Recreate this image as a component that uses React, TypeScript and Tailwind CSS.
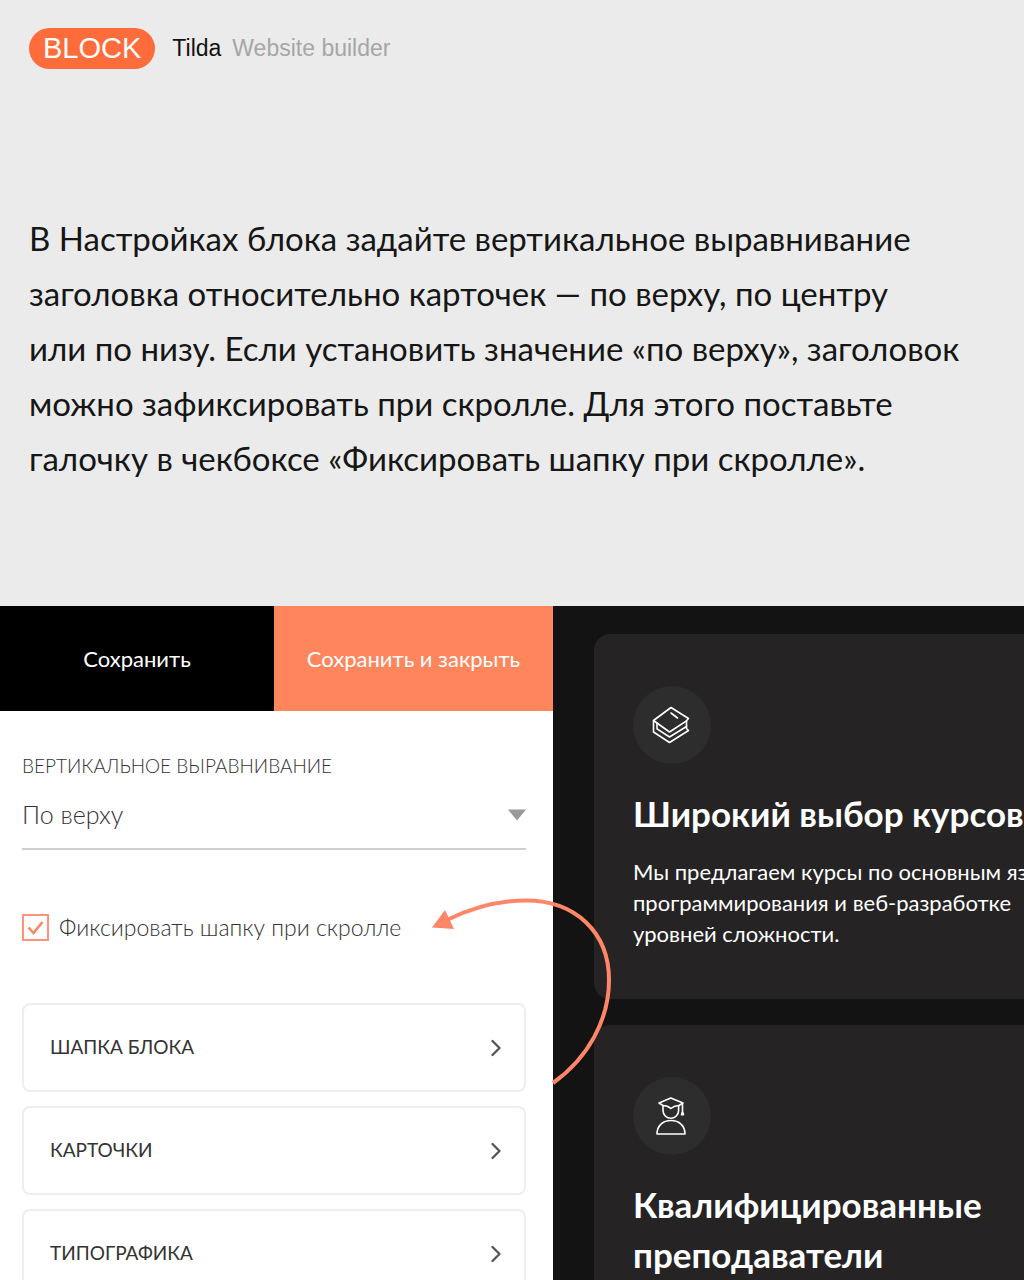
import { useState } from "react";
import type { ReactNode } from "react";
import { ChevronRight } from "lucide-react";

const sections = ["ШАПКА БЛОКА", "КАРТОЧКИ", "ТИПОГРАФИКА"];

function BooksIcon() {
  return (
    <svg viewBox="0 0 40 40" className="h-10 w-10" fill="none" stroke="white" strokeWidth="1.6" strokeLinejoin="round" strokeLinecap="round">
      <path d="M19 2.5 36.5 13.5 34.5 15.8 17.5 27 1.5 15.5Z" />
      <path d="M1.5 15.5V27L17.5 37.5 36.5 25.5 34.5 23.5V15.8" />
      <path d="M5 18.2V23.8L17.5 32 34.5 21.5" />
      <path d="M19 8 25.5 13" />
    </svg>
  );
}

function GraduateIcon() {
  return (
    <svg viewBox="0 0 40 40" className="h-10 w-10" fill="none" stroke="white" strokeWidth="1.6" strokeLinejoin="round" strokeLinecap="round">
      <path d="M7 7 18.8 2 31 7 27 9.5Q22.5 9.5 18.8 12.5 15.5 9.5 11 9.5Z" />
      <path d="M11 9.5V14.5a7.8 7.8 0 0 0 15.6 0V9.5" />
      <path d="M30.5 7.5V16M30.5 15.5 29.5 18.8h2Z" />
      <path d="M5 38C5 29.5 11 24.5 19 24.5s14 5 14 13.5Z" />
    </svg>
  );
}

function FeatureCard({ icon, title, children }: { icon: ReactNode; title: ReactNode; children?: ReactNode }) {
  return (
    <article className="w-[560px] rounded-2xl bg-[#252324] px-[39px] pt-[52px] pb-[50px] text-white">
      <div className="flex h-[78px] w-[78px] items-center justify-center rounded-full bg-[#2d2d2d]">{icon}</div>
      <h2 className="mt-6 text-[35px] leading-[50px] font-bold whitespace-nowrap">{title}</h2>
      {children && <p className="mt-[18px] text-[22px] leading-[31px] whitespace-nowrap">{children}</p>}
    </article>
  );
}

export default function App() {
  const [align, setAlign] = useState("top");
  const [fixed, setFixed] = useState(true);

  return (
    <div className="flex h-screen flex-col overflow-hidden bg-[#ebebeb] font-['Lato','Open_Sans',sans-serif]">
      <header className="flex shrink-0 items-center px-[29px] pt-7 font-['Liberation_Sans',Arial,sans-serif]">
        <span className="flex h-[41px] items-center rounded-full bg-[#ff6c3b] px-[14px] text-[29px] text-white">BLOCK</span>
        <span className="ml-[17px] text-[23px] text-[#111]">Tilda</span>
        <span className="ml-[11px] text-[23px] text-[#a6a6a6]">Website builder</span>
      </header>

      <p className="shrink-0 px-[29px] pt-[142px] pb-[120px] text-[33px] leading-[55px] text-[#161616]">
        В Настройках блока задайте вертикальное выравнивание
        <br />
        заголовка относительно карточек — по верху, по центру
        <br />
        или по низу. Если установить значение «по верху», заголовок
        <br />
        можно зафиксировать при скролле. Для этого поставьте
        <br />
        галочку в чекбоксе «Фиксировать шапку при скролле».
      </p>

      <main className="flex min-h-0 flex-1">
        <section className="relative w-[54%] shrink-0 bg-white text-[#333]">
          <div className="flex h-[105px] text-[22px] text-white">
            <button className="h-full w-[274px] bg-black">Сохранить</button>
            <button className="h-full flex-1 bg-[#ff855d]">Сохранить и закрыть</button>
          </div>

          <div className="pt-10 pr-[27px] pl-[22px]">
            <label htmlFor="align" className="block text-[19px] leading-[30px] font-light">
              ВЕРТИКАЛЬНОЕ ВЫРАВНИВАНИЕ
            </label>
            <div className="relative border-b-2 border-[#cfcfcf]">
              <select
                id="align"
                value={align}
                onChange={(e) => setAlign(e.target.value)}
                className="h-[67px] w-full appearance-none bg-transparent text-[25px] font-light outline-none"
              >
                <option value="top">По верху</option>
                <option value="center">По центру</option>
                <option value="bottom">По низу</option>
              </select>
              <svg viewBox="0 0 18 12" className="pointer-events-none absolute top-7 right-0 h-3 w-[18px]">
                <path d="M0 0.5H18L9 11.5Z" fill="#999" />
              </svg>
            </div>

            <label className="mt-[62px] flex items-center gap-[10px] text-[23px] leading-[30px] font-light">
              <span className="relative h-[27px] w-[27px]">
                <input
                  type="checkbox"
                  checked={fixed}
                  onChange={(e) => setFixed(e.target.checked)}
                  className="block h-full w-full appearance-none border-2 border-[#ff9279] bg-white"
                />
                {fixed && (
                  <svg viewBox="0 0 27 27" className="pointer-events-none absolute inset-0" fill="none" stroke="#ff8562" strokeWidth="2.5">
                    <path d="M6.5 13.5 11.5 19 20.5 8" />
                  </svg>
                )}
              </span>
              Фиксировать шапку при скролле
            </label>

            <div className="mt-[61px] flex flex-col gap-[14px]">
              {sections.map((name) => (
                <button key={name} className="flex h-[89px] items-center justify-between rounded-lg border-2 border-[#eee] pr-[14px] pl-[26px] text-[19px]">
                  {name}
                  <ChevronRight size={28} strokeWidth={2} color="#555" />
                </button>
              ))}
            </div>
          </div>

          <svg viewBox="0 0 220 220" className="pointer-events-none absolute top-[274px] left-full z-10 -ml-[133px] h-[220px] w-[220px]" fill="none">
            <path d="M28 39.5C60 24 86 20.5 106 20.5 155 20.5 189 52 189 100 189 140 168 178 133 203" stroke="#ff8669" strokeWidth="4" />
            <path d="M12 47.5 25 30 34 49Z" fill="#ff8669" />
          </svg>
        </section>

        <section className="flex min-w-0 flex-1 flex-col gap-[26px] overflow-hidden bg-[#131313] pt-7 pl-[41px]">
          <FeatureCard icon={<BooksIcon />} title="Широкий выбор курсов">
            Мы предлагаем курсы по основным яз
            <br />
            программирования и веб-разработке
            <br />
            уровней сложности.
          </FeatureCard>
          <FeatureCard
            icon={<GraduateIcon />}
            title={
              <>
                Квалифицированные
                <br />
                преподаватели
              </>
            }
          />
        </section>
      </main>
    </div>
  );
}
